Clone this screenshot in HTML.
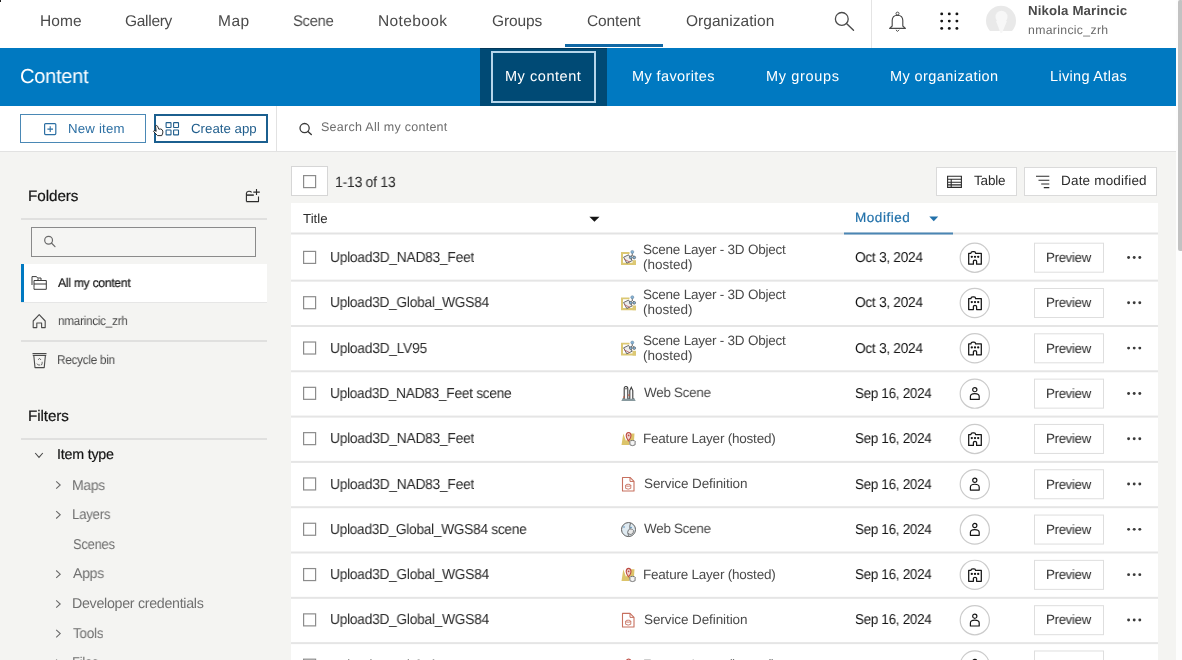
<!DOCTYPE html>
<html><head><meta charset="utf-8"><title>Content</title><style>
html,body{margin:0;padding:0}
body{width:1182px;height:660px;overflow:hidden;position:relative;background:#f4f4f2;font-family:"Liberation Sans",sans-serif}
.a{position:absolute;box-sizing:border-box}
.t{position:absolute;white-space:pre;line-height:20px;font-family:"Liberation Sans",sans-serif;will-change:transform;transform-origin:0 0;text-rendering:geometricPrecision}
svg.ov{position:absolute;left:0;top:0}
</style></head><body>
<!-- top nav -->
<div class="a" style="left:0;top:0;width:1176px;height:48px;background:#fff"></div>
<div class="a" style="left:0;top:0;width:1px;height:2px;background:#222"></div>
<div class="a" style="left:565px;top:44px;width:98px;height:3px;background:#1068a5"></div>
<div class="a" style="left:871px;top:0;width:1px;height:48px;background:#e4e4e4"></div>
<!-- banner -->
<div class="a" style="left:0;top:48px;width:1176px;height:58px;background:#0079c1"></div>
<div class="a" style="left:480px;top:48px;width:127px;height:58px;background:#004a75;border-top:1px solid #02385b"></div>
<div class="a" style="left:491px;top:51px;width:105px;height:52px;border:2px solid #b5d5ea"></div>
<!-- toolbar -->
<div class="a" style="left:0;top:106px;width:1176px;height:46px;background:#fff;border-bottom:1px solid #e2e2e2"></div>
<div class="a" style="left:276px;top:106px;width:1px;height:45px;background:#e2e2e2"></div>
<div class="a" style="left:20px;top:114px;width:126px;height:29px;border:1px solid #4a88b5;background:#fff"></div>
<div class="a" style="left:154px;top:114px;width:114px;height:29px;border:2px solid #1b5f8f;background:#fff"></div>
<!-- scrollbar -->
<div class="a" style="left:1176px;top:0;width:6px;height:660px;background:#fdfdfd"></div>
<div class="a" style="left:1178px;top:0;width:5px;height:251px;background:#c2c2c2;border-radius:2px"></div>
<!-- sidebar -->
<div class="a" style="left:21px;top:218px;width:246px;height:2px;background:#e0e0df"></div>
<div class="a" style="left:31px;top:227px;width:225px;height:30px;border:1.5px solid #8a8a8a;background:#f5f5f3"></div>
<div class="a" style="left:21px;top:264px;width:246px;height:38px;background:#fff"></div>
<div class="a" style="left:21px;top:264px;width:3px;height:38px;background:#0079c1"></div>
<div class="a" style="left:21px;top:302px;width:246px;height:1px;background:#e6e6e6"></div>
<div class="a" style="left:21px;top:340px;width:246px;height:2px;background:#e0e0df"></div>
<div class="a" style="left:21px;top:438px;width:246px;height:2px;background:#e0e0df"></div>
<!-- table top controls -->
<div class="a" style="left:291px;top:166px;width:37px;height:30px;border:1px solid #d6d6d6;background:#fff"></div>
<div class="a" style="left:936px;top:167px;width:81px;height:29px;border:1px solid #dadada;background:#fff"></div>
<div class="a" style="left:1024px;top:167px;width:133px;height:29px;border:1px solid #dadada;background:#fff"></div>
<!-- table -->
<div class="a" style="left:291px;top:203px;width:867px;height:457px;background:#fff"></div>
<!--ROWS-->
<svg class="ov" width="1182" height="660" viewBox="0 0 1182 660">
<defs>
<symbol id="org" viewBox="0 0 14 14" overflow="visible"><path d="M0.7 13.3 V2.4 H2.9 Q3 0.7 4.8 0.7 H6 Q7.5 0.7 7.6 2.4 H13.3 V13.3 H8.6 V10.3 Q8.6 9.2 7 9.2 Q5.4 9.2 5.4 10.3 V13.3 Z" fill="none" stroke="#151515" stroke-width="1.25" stroke-linejoin="round"/><circle cx="3.8" cy="5.9" r="1.15" fill="#151515"/><circle cx="7" cy="5.9" r="1.15" fill="#151515"/><circle cx="10.2" cy="5.9" r="1.15" fill="#151515"/></symbol>
<symbol id="me" viewBox="0 0 10 13" overflow="visible"><circle cx="5" cy="2.6" r="2.1" fill="none" stroke="#151515" stroke-width="1.2"/><path d="M0.6 12.4 V9.5 Q0.6 6.6 5 6.6 Q9.4 6.6 9.4 9.5 V12.4 Z" fill="none" stroke="#151515" stroke-width="1.2" stroke-linejoin="round"/></symbol>
<symbol id="obj" viewBox="0 0 15 15" overflow="visible"><path d="M0 1.9 H8.5 V3.7 H2 V12.6 H15 V14.7 H0 Z" fill="#dcc874"/><path d="M11.5 10 H15 V14.7 H11.5 Z" fill="#dcc874"/><path d="M2.6 7 L7.6 4.6 L11.2 10.4 L5.8 13 Z" fill="#ececec" stroke="#5a5a5a" stroke-width="0.9" stroke-linejoin="round"/><path d="M3.2 9 L9 12" stroke="#b85a5a" stroke-width="0.8"/><path d="M11.3 2.2 V4.8 M9.8 6.3 L11.3 4.8 L12.8 6.3" fill="none" stroke="#4a4a4a" stroke-width="0.8"/><circle cx="11.3" cy="1.7" r="1.5" fill="#86b3d6" stroke="#5d7d96" stroke-width="0.5"/><circle cx="9.8" cy="7.3" r="1.4" fill="#86b3d6" stroke="#4a4a4a" stroke-width="0.6"/><circle cx="13.2" cy="7.3" r="1.4" fill="#86b3d6" stroke="#4a4a4a" stroke-width="0.6"/></symbol>
<symbol id="city" viewBox="0 0 15 15" overflow="visible"><path d="M0.3 14.8 L1.8 11.8 H13.2 L14.7 14.8 Z" fill="#87999e"/><path d="M3.2 12.5 V2.5 Q3.2 0.3 5 0.3 Q6.8 0.3 6.8 2.5 V12.5" fill="#fafafa" stroke="#3c3c3c" stroke-width="1.1"/><path d="M8.8 12.5 V4.5 L10.3 1.2 L11.8 4.5 V12.5" fill="#fafafa" stroke="#3c3c3c" stroke-width="1.1"/><path d="M4.2 2.6 H5.8" stroke="#3c3c3c" stroke-width="0.9"/><circle cx="3" cy="11" r="0.8" fill="#c4573e"/><circle cx="8" cy="9" r="0.8" fill="#c4573e"/></symbol>
<symbol id="feat" viewBox="0 0 15 15" overflow="visible"><path d="M0.5 13.6 L2.3 2 L5 9.5 L9.5 2 L13.5 2 L13 9 H9.5 L8 13.6 Z" fill="#dcc46a"/><path d="M5.2 4.3 Q5.2 1 7.6 1 Q10 1 10 4.3 Q10 6.5 7.6 9.4 Q5.2 6.5 5.2 4.3 Z" fill="#f0d4d0" stroke="#bd4b43" stroke-width="1.1"/><circle cx="7.6" cy="4" r="0.9" fill="#bd4b43"/><ellipse cx="11.5" cy="10" rx="2.6" ry="1" fill="#fff" stroke="#6a6a6a" stroke-width="0.9"/><path d="M8.9 10 V13.4 Q11.5 15 14.1 13.4 V10" fill="#f4f4f4" stroke="#6a6a6a" stroke-width="0.9"/></symbol>
<symbol id="sd" viewBox="0 0 15 15" overflow="visible"><path d="M1.5 0.7 H9 L13 4.7 V14.3 H1.5 Z" fill="#fff" stroke="#c7705f" stroke-width="1.1" stroke-linejoin="round"/><path d="M9 0.7 V4.7 H13" fill="none" stroke="#c7705f" stroke-width="1"/><ellipse cx="7.2" cy="8.5" rx="2.6" ry="1" fill="#fff" stroke="#c7705f" stroke-width="0.9"/><path d="M4.6 8.5 V11.6 Q7.2 13.2 9.8 11.6 V8.5" fill="none" stroke="#c7705f" stroke-width="0.9"/></symbol>
<symbol id="globe" viewBox="0 0 15 15" overflow="visible"><circle cx="7.5" cy="7.5" r="7" fill="#dfeaf1" stroke="#5d5d5d" stroke-width="1"/><path d="M9.5 1.2 Q8.3 4 9 6.8 Q6.2 8 6.8 11 Q8.2 14 7 14.4" fill="none" stroke="#5d5d5d" stroke-width="0.9"/><path d="M9 7 Q11.5 6.5 12.5 8.5 Q13 11.5 10 12.5 Q7.5 12.5 7.2 10.8" fill="#e8e8e8" stroke="#5d5d5d" stroke-width="0.7"/><circle cx="3" cy="5" r="0.8" fill="#4f88b5"/><circle cx="10" cy="5.5" r="0.8" fill="#4f88b5"/></symbol>
</defs>
<circle cx="841.8" cy="18.9" r="6.4" fill="none" stroke="#4a4a4a" stroke-width="1.3"/><path d="M846.5 23.6 L853.5 30.2" stroke="#4a4a4a" stroke-width="1.4" stroke-linecap="round"/>
<path d="M889.6 28.4 H905.4 L902.8 26 V20.5 Q902.8 15.4 897.5 15.2 Q892.2 15.4 892.2 20.5 V26 Z" fill="none" stroke="#4a4a4a" stroke-width="1.15" stroke-linejoin="round"/><circle cx="897.5" cy="13.6" r="1.5" fill="none" stroke="#4a4a4a" stroke-width="1"/><path d="M895.9 29.8 L897.5 31.4 L899.1 29.8" fill="none" stroke="#4a4a4a" stroke-width="1"/>
<circle cx="941.7" cy="13.9" r="1.45" fill="#151515"/>
<circle cx="949.3" cy="13.9" r="1.45" fill="#151515"/>
<circle cx="956.9" cy="13.9" r="1.45" fill="#151515"/>
<circle cx="941.7" cy="21.1" r="1.45" fill="#151515"/>
<circle cx="949.3" cy="21.1" r="1.45" fill="#151515"/>
<circle cx="956.9" cy="21.1" r="1.45" fill="#151515"/>
<circle cx="941.7" cy="28.4" r="1.45" fill="#151515"/>
<circle cx="949.3" cy="28.4" r="1.45" fill="#151515"/>
<circle cx="956.9" cy="28.4" r="1.45" fill="#151515"/>
<path d="M990 31 A15 15 0 1 1 1012 31 Z" fill="#e9e9e9"/><ellipse cx="1001.5" cy="17" rx="6" ry="6.3" fill="#f7f7f7"/><path d="M996 21 L1007 21 L1002 33 L1000.5 33 Z" fill="#f7f7f7"/>
<rect x="44.6" y="123.6" width="11.2" height="11" rx="1" fill="none" stroke="#2c6fa3" stroke-width="1.2"/><path d="M50.2 126.3 V131.9 M47.4 129.1 H53" stroke="#2c6fa3" stroke-width="1.1"/>
<rect x="166.1" y="122.6" width="4.9" height="4.9" rx="0.5" fill="none" stroke="#1f5d8c" stroke-width="1.1"/>
<rect x="173.6" y="122.6" width="4.9" height="4.9" rx="0.5" fill="none" stroke="#1f5d8c" stroke-width="1.1"/>
<rect x="166.1" y="130" width="4.9" height="4.9" rx="0.5" fill="none" stroke="#1f5d8c" stroke-width="1.1"/>
<rect x="173.6" y="130" width="4.9" height="4.9" rx="0.5" fill="none" stroke="#1f5d8c" stroke-width="1.1"/>
<circle cx="304.6" cy="128.1" r="4.6" fill="none" stroke="#3a3a3a" stroke-width="1.3"/><path d="M307.9 131.4 L311.3 134.6" stroke="#3a3a3a" stroke-width="1.4" stroke-linecap="round"/>
<path d="M155.5 125.8 Q156.8 125 157.6 126.2 L158.8 129.2 Q160.8 128.6 162 129.6 Q163.2 130.8 162.8 133 L161.8 135.6 H157.6 L153.8 131.8 Q153.2 131 154 130.6 Q155 130.3 156.2 131.4 Z" fill="#fff" stroke="#1a1a1a" stroke-width="0.9" stroke-linejoin="round"/>
<path d="M246.4 201.6 V193.4 Q246.6 191.5 248.8 191.3 Q250.6 191.2 251.6 192.4 M246.4 201.6 H258.5 V196.5" fill="none" stroke="#2b2b2b" stroke-width="1.1" stroke-linejoin="round"/><path d="M246.4 195.1 H253.8" stroke="#2b2b2b" stroke-width="1.5"/><path d="M256.5 189.1 V194.9 M253.3 192.1 H259.8" stroke="#2b2b2b" stroke-width="1.1"/>
<circle cx="48.6" cy="240.2" r="3.9" fill="none" stroke="#6a6a6a" stroke-width="1.2"/><path d="M51.4 243 L55 246.6" stroke="#6a6a6a" stroke-width="1.2" stroke-linecap="round"/>
<path d="M32 285 V276.6 H36.5 L37.6 278 H41 V280.5 M34 287.5 V280.5 H46.3 V289.3 H34 Z M34 284 H46.3 M38 280.5 V278.5" fill="none" stroke="#3a3a3a" stroke-width="1" stroke-linejoin="round"/>
<path d="M33.2 321 L39.2 314.6 L45.2 321 V327.6 H41.6 V323 H36.8 V327.6 H33.2 Z" fill="none" stroke="#4a4a4a" stroke-width="1.1" stroke-linejoin="round"/>
<path d="M32.5 353.6 H46.5 M32.8 355.5 H46.2 M33.8 355.5 L35 367.6 H44.2 L45.4 355.5" fill="none" stroke="#4a4a4a" stroke-width="1.1" stroke-linejoin="round"/><path d="M38 359.8 L39.6 358.4 L41 360 M37 363.6 L38.2 365 H40 M42.2 361.8 L42 364.4 L40.8 365" fill="none" stroke="#4a4a4a" stroke-width="0.8"/>
<path d="M35.2 453 L39 457.3 L42.8 453" fill="none" stroke="#4a4a4a" stroke-width="1.1"/>
<path d="M56.2 481.3 L60.2 485.0 L56.2 488.7" fill="none" stroke="#6a6a6a" stroke-width="1.1"/>
<path d="M56.2 511.1 L60.2 514.8 L56.2 518.5" fill="none" stroke="#6a6a6a" stroke-width="1.1"/>
<path d="M56.2 570.5 L60.2 574.2 L56.2 577.9" fill="none" stroke="#6a6a6a" stroke-width="1.1"/>
<path d="M56.2 600.3 L60.2 604.0 L56.2 607.7" fill="none" stroke="#6a6a6a" stroke-width="1.1"/>
<path d="M56.2 629.9 L60.2 633.6 L56.2 637.3" fill="none" stroke="#6a6a6a" stroke-width="1.1"/>
<path d="M56.2 659.6 L60.2 663.3 L56.2 667.0" fill="none" stroke="#6a6a6a" stroke-width="1.1"/>
<rect x="303.6" y="175.6" width="12" height="12" fill="none" stroke="#8c8c8c" stroke-width="1.2"/>
<path d="M947.6 176.2 H961.4 V187.4 H947.6 Z M947.6 179.2 H961.4 M947.6 182.2 H961.4 M947.6 184.9 H961.4 M951.2 179.2 V187.4" fill="none" stroke="#2b2b2b" stroke-width="1.1"/>
<path d="M1036 176.3 H1049.3 M1038.5 180.2 H1049.3 M1041.2 184 H1049.3 M1043.8 187.6 H1049.3" stroke="#2b2b2b" stroke-width="1.1"/>
<path d="M589.4 216.7 H599.5 L594.45 221.8 Z" fill="#151515"/>
<path d="M929.3 216.4 H938.2 L933.75 221.3 Z" fill="#2271aa"/>
<rect x="291" y="232.5" width="867" height="2" fill="#e3e3e3"/>
<rect x="844" y="232.5" width="109" height="2" fill="#4a86b4"/>
<rect x="291" y="279.65" width="867" height="2" fill="#e5e5e5"/>
<rect x="303.6" y="251.40" width="12" height="12" fill="none" stroke="#8c8c8c" stroke-width="1.2"/>
<use href="#obj" x="621" y="250.20" width="15" height="15"/>
<circle cx="974.8" cy="257.70" r="14.6" fill="#fff" stroke="#cbcbcb" stroke-width="1.2"/>
<use href="#org" x="968" y="250.90" width="14" height="14"/>
<rect x="1034.5" y="243.20" width="69" height="29" fill="#fff" stroke="#dedede" stroke-width="1"/>
<circle cx="1128.6" cy="257.50" r="1.45" fill="#3a3a3a"/>
<circle cx="1134.2" cy="257.50" r="1.45" fill="#3a3a3a"/>
<circle cx="1139.8" cy="257.50" r="1.45" fill="#3a3a3a"/>
<rect x="291" y="324.97" width="867" height="2" fill="#e5e5e5"/>
<rect x="303.6" y="296.71" width="12" height="12" fill="none" stroke="#8c8c8c" stroke-width="1.2"/>
<use href="#obj" x="621" y="295.51" width="15" height="15"/>
<circle cx="974.8" cy="303.01" r="14.6" fill="#fff" stroke="#cbcbcb" stroke-width="1.2"/>
<use href="#org" x="968" y="296.21" width="14" height="14"/>
<rect x="1034.5" y="288.51" width="69" height="29" fill="#fff" stroke="#dedede" stroke-width="1"/>
<circle cx="1128.6" cy="302.81" r="1.45" fill="#3a3a3a"/>
<circle cx="1134.2" cy="302.81" r="1.45" fill="#3a3a3a"/>
<circle cx="1139.8" cy="302.81" r="1.45" fill="#3a3a3a"/>
<rect x="291" y="370.27" width="867" height="2" fill="#e5e5e5"/>
<rect x="303.6" y="342.02" width="12" height="12" fill="none" stroke="#8c8c8c" stroke-width="1.2"/>
<use href="#obj" x="621" y="340.82" width="15" height="15"/>
<circle cx="974.8" cy="348.32" r="14.6" fill="#fff" stroke="#cbcbcb" stroke-width="1.2"/>
<use href="#org" x="968" y="341.52" width="14" height="14"/>
<rect x="1034.5" y="333.82" width="69" height="29" fill="#fff" stroke="#dedede" stroke-width="1"/>
<circle cx="1128.6" cy="348.12" r="1.45" fill="#3a3a3a"/>
<circle cx="1134.2" cy="348.12" r="1.45" fill="#3a3a3a"/>
<circle cx="1139.8" cy="348.12" r="1.45" fill="#3a3a3a"/>
<rect x="291" y="415.59" width="867" height="2" fill="#e5e5e5"/>
<rect x="303.6" y="387.33" width="12" height="12" fill="none" stroke="#8c8c8c" stroke-width="1.2"/>
<use href="#city" x="621" y="386.13" width="15" height="15"/>
<circle cx="974.8" cy="393.63" r="14.6" fill="#fff" stroke="#cbcbcb" stroke-width="1.2"/>
<use href="#me" x="969.8" y="387.03" width="10" height="13"/>
<rect x="1034.5" y="379.13" width="69" height="29" fill="#fff" stroke="#dedede" stroke-width="1"/>
<circle cx="1128.6" cy="393.43" r="1.45" fill="#3a3a3a"/>
<circle cx="1134.2" cy="393.43" r="1.45" fill="#3a3a3a"/>
<circle cx="1139.8" cy="393.43" r="1.45" fill="#3a3a3a"/>
<rect x="291" y="460.89" width="867" height="2" fill="#e5e5e5"/>
<rect x="303.6" y="432.64" width="12" height="12" fill="none" stroke="#8c8c8c" stroke-width="1.2"/>
<use href="#feat" x="621" y="431.44" width="15" height="15"/>
<circle cx="974.8" cy="438.94" r="14.6" fill="#fff" stroke="#cbcbcb" stroke-width="1.2"/>
<use href="#org" x="968" y="432.14" width="14" height="14"/>
<rect x="1034.5" y="424.44" width="69" height="29" fill="#fff" stroke="#dedede" stroke-width="1"/>
<circle cx="1128.6" cy="438.74" r="1.45" fill="#3a3a3a"/>
<circle cx="1134.2" cy="438.74" r="1.45" fill="#3a3a3a"/>
<circle cx="1139.8" cy="438.74" r="1.45" fill="#3a3a3a"/>
<rect x="291" y="506.21" width="867" height="2" fill="#e5e5e5"/>
<rect x="303.6" y="477.95" width="12" height="12" fill="none" stroke="#8c8c8c" stroke-width="1.2"/>
<use href="#sd" x="621" y="476.75" width="15" height="15"/>
<circle cx="974.8" cy="484.25" r="14.6" fill="#fff" stroke="#cbcbcb" stroke-width="1.2"/>
<use href="#me" x="969.8" y="477.65" width="10" height="13"/>
<rect x="1034.5" y="469.75" width="69" height="29" fill="#fff" stroke="#dedede" stroke-width="1"/>
<circle cx="1128.6" cy="484.05" r="1.45" fill="#3a3a3a"/>
<circle cx="1134.2" cy="484.05" r="1.45" fill="#3a3a3a"/>
<circle cx="1139.8" cy="484.05" r="1.45" fill="#3a3a3a"/>
<rect x="291" y="551.51" width="867" height="2" fill="#e5e5e5"/>
<rect x="303.6" y="523.26" width="12" height="12" fill="none" stroke="#8c8c8c" stroke-width="1.2"/>
<use href="#globe" x="621" y="522.06" width="15" height="15"/>
<circle cx="974.8" cy="529.56" r="14.6" fill="#fff" stroke="#cbcbcb" stroke-width="1.2"/>
<use href="#me" x="969.8" y="522.96" width="10" height="13"/>
<rect x="1034.5" y="515.06" width="69" height="29" fill="#fff" stroke="#dedede" stroke-width="1"/>
<circle cx="1128.6" cy="529.36" r="1.45" fill="#3a3a3a"/>
<circle cx="1134.2" cy="529.36" r="1.45" fill="#3a3a3a"/>
<circle cx="1139.8" cy="529.36" r="1.45" fill="#3a3a3a"/>
<rect x="291" y="596.83" width="867" height="2" fill="#e5e5e5"/>
<rect x="303.6" y="568.57" width="12" height="12" fill="none" stroke="#8c8c8c" stroke-width="1.2"/>
<use href="#feat" x="621" y="567.37" width="15" height="15"/>
<circle cx="974.8" cy="574.87" r="14.6" fill="#fff" stroke="#cbcbcb" stroke-width="1.2"/>
<use href="#org" x="968" y="568.07" width="14" height="14"/>
<rect x="1034.5" y="560.37" width="69" height="29" fill="#fff" stroke="#dedede" stroke-width="1"/>
<circle cx="1128.6" cy="574.67" r="1.45" fill="#3a3a3a"/>
<circle cx="1134.2" cy="574.67" r="1.45" fill="#3a3a3a"/>
<circle cx="1139.8" cy="574.67" r="1.45" fill="#3a3a3a"/>
<rect x="291" y="642.13" width="867" height="2" fill="#e5e5e5"/>
<rect x="303.6" y="613.88" width="12" height="12" fill="none" stroke="#8c8c8c" stroke-width="1.2"/>
<use href="#sd" x="621" y="612.68" width="15" height="15"/>
<circle cx="974.8" cy="620.18" r="14.6" fill="#fff" stroke="#cbcbcb" stroke-width="1.2"/>
<use href="#me" x="969.8" y="613.58" width="10" height="13"/>
<rect x="1034.5" y="605.68" width="69" height="29" fill="#fff" stroke="#dedede" stroke-width="1"/>
<circle cx="1128.6" cy="619.98" r="1.45" fill="#3a3a3a"/>
<circle cx="1134.2" cy="619.98" r="1.45" fill="#3a3a3a"/>
<circle cx="1139.8" cy="619.98" r="1.45" fill="#3a3a3a"/>
<rect x="291" y="687.44" width="867" height="2" fill="#e5e5e5"/>
<rect x="303.6" y="659.19" width="12" height="12" fill="none" stroke="#8c8c8c" stroke-width="1.2"/>
<use href="#feat" x="621" y="657.99" width="15" height="15"/>
<circle cx="974.8" cy="665.49" r="14.6" fill="#fff" stroke="#cbcbcb" stroke-width="1.2"/>
<use href="#me" x="969.8" y="658.89" width="10" height="13"/>
<rect x="1034.5" y="650.99" width="69" height="29" fill="#fff" stroke="#dedede" stroke-width="1"/>
<circle cx="1128.6" cy="665.29" r="1.45" fill="#3a3a3a"/>
<circle cx="1134.2" cy="665.29" r="1.45" fill="#3a3a3a"/>
<circle cx="1139.8" cy="665.29" r="1.45" fill="#3a3a3a"/>
</svg>
<div class="t" style="left:39.50px;top:11.7px;font-size:15.5px;font-weight:400;color:#4a4a4a;letter-spacing:0.091px;">Home</div>
<div class="t" style="left:125.40px;top:11.7px;font-size:15.5px;font-weight:400;color:#4a4a4a;letter-spacing:-0.291px;">Gallery</div>
<div class="t" style="left:217.50px;top:11.7px;font-size:15.5px;font-weight:400;color:#4a4a4a;letter-spacing:0.484px;">Map</div>
<div class="t" style="left:293.40px;top:11.7px;font-size:15.5px;font-weight:400;color:#4a4a4a;letter-spacing:-0.300px;transform:scaleX(0.9518);">Scene</div>
<div class="t" style="left:377.90px;top:11.7px;font-size:15.5px;font-weight:400;color:#4a4a4a;letter-spacing:0.371px;">Notebook</div>
<div class="t" style="left:491.90px;top:11.7px;font-size:15.5px;font-weight:400;color:#4a4a4a;letter-spacing:-0.116px;">Groups</div>
<div class="t" style="left:586.80px;top:11.7px;font-size:15.5px;font-weight:400;color:#4a4a4a;letter-spacing:-0.114px;">Content</div>
<div class="t" style="left:685.60px;top:11.7px;font-size:15.5px;font-weight:400;color:#4a4a4a;letter-spacing:0.040px;">Organization</div>
<div class="t" style="left:1028.00px;top:0.6px;font-size:13.25px;font-weight:700;color:#4a4a4a;letter-spacing:0.141px;">Nikola Marincic</div>
<div class="t" style="left:1028.00px;top:19.8px;font-size:12.25px;font-weight:400;color:#6a6a6a;letter-spacing:0.322px;">nmarincic_zrh</div>
<div class="t" style="left:20.01px;top:66.9px;font-size:20.25px;font-weight:400;color:#ffffff;letter-spacing:-0.300px;transform:scaleX(0.9927);">Content</div>
<div class="t" style="left:505.20px;top:67.3px;font-size:14.5px;font-weight:400;color:#ffffff;letter-spacing:0.545px;">My content</div>
<div class="t" style="left:632.20px;top:67.3px;font-size:14.5px;font-weight:400;color:#ffffff;letter-spacing:0.390px;">My favorites</div>
<div class="t" style="left:765.60px;top:67.3px;font-size:14.5px;font-weight:400;color:#ffffff;letter-spacing:0.657px;">My groups</div>
<div class="t" style="left:890.00px;top:67.3px;font-size:14.5px;font-weight:400;color:#ffffff;letter-spacing:0.415px;">My organization</div>
<div class="t" style="left:1050.10px;top:67.3px;font-size:14.5px;font-weight:400;color:#ffffff;letter-spacing:0.318px;">Living Atlas</div>
<div class="t" style="left:67.50px;top:118.8px;font-size:13.25px;font-weight:400;color:#2c6fa3;letter-spacing:0.188px;">New item</div>
<div class="t" style="left:191.00px;top:118.8px;font-size:13.25px;font-weight:400;color:#1f5d8c;letter-spacing:0.012px;">Create app</div>
<div class="t" style="left:321.20px;top:117.4px;font-size:12.5px;font-weight:400;color:#6e6e6e;letter-spacing:0.270px;">Search All my content</div>
<div class="t" style="left:27.60px;top:187.0px;font-size:15.25px;font-weight:400;color:#151515;letter-spacing:-0.071px;-webkit-text-stroke:0.2px #151515">Folders</div>
<div class="t" style="left:57.90px;top:272.6px;font-size:12.5px;font-weight:400;color:#151515;letter-spacing:-0.300px;transform:scaleX(0.9743);-webkit-text-stroke:0.2px #151515">All my content</div>
<div class="t" style="left:57.90px;top:311.0px;font-size:12.75px;font-weight:400;color:#4a4a4a;letter-spacing:-0.300px;transform:scaleX(0.9211);">nmarincic_zrh</div>
<div class="t" style="left:56.98px;top:350.2px;font-size:12.75px;font-weight:400;color:#4a4a4a;letter-spacing:-0.300px;transform:scaleX(0.9238);">Recycle bin</div>
<div class="t" style="left:27.60px;top:407.4px;font-size:15.25px;font-weight:400;color:#151515;letter-spacing:-0.098px;-webkit-text-stroke:0.2px #151515">Filters</div>
<div class="t" style="left:56.90px;top:444.8px;font-size:14.25px;font-weight:400;color:#151515;letter-spacing:-0.198px;-webkit-text-stroke:0.2px #151515">Item type</div>
<div class="t" style="left:71.62px;top:475.6px;font-size:14.25px;font-weight:400;color:#707070;letter-spacing:-0.300px;transform:scaleX(0.9780);">Maps</div>
<div class="t" style="left:71.67px;top:505.3px;font-size:14.25px;font-weight:400;color:#707070;letter-spacing:-0.300px;transform:scaleX(0.9316);">Layers</div>
<div class="t" style="left:72.60px;top:534.5px;font-size:14.25px;font-weight:400;color:#707070;letter-spacing:-0.300px;transform:scaleX(0.9106);">Scenes</div>
<div class="t" style="left:72.60px;top:564.1px;font-size:14.25px;font-weight:400;color:#707070;letter-spacing:-0.300px;transform:scaleX(0.9855);">Apps</div>
<div class="t" style="left:71.60px;top:594.2px;font-size:14.25px;font-weight:400;color:#707070;letter-spacing:-0.300px;">Developer credentials</div>
<div class="t" style="left:72.60px;top:623.6px;font-size:14.25px;font-weight:400;color:#707070;letter-spacing:-0.300px;transform:scaleX(0.9517);">Tools</div>
<div class="t" style="left:71.69px;top:653.3px;font-size:14.25px;font-weight:400;color:#707070;letter-spacing:-0.300px;transform:scaleX(0.9149);">Files</div>
<div class="t" style="left:335.05px;top:172.5px;font-size:14.75px;font-weight:400;color:#2b2b2b;letter-spacing:-0.300px;transform:scaleX(0.9533);">1-13 of 13</div>
<div class="t" style="left:974.00px;top:171.4px;font-size:13.5px;font-weight:400;color:#2b2b2b;letter-spacing:-0.191px;">Table</div>
<div class="t" style="left:1060.60px;top:171.4px;font-size:13.5px;font-weight:400;color:#2b2b2b;letter-spacing:0.193px;">Date modified</div>
<div class="t" style="left:303.40px;top:208.8px;font-size:13.25px;font-weight:400;color:#2b2b2b;letter-spacing:0.032px;">Title</div>
<div class="t" style="left:855.30px;top:208.3px;font-size:13.5px;font-weight:400;color:#2271aa;letter-spacing:0.540px;-webkit-text-stroke:0.2px #2271aa">Modified</div>
<div class="t" style="left:330.34px;top:248.0px;font-size:14.5px;font-weight:400;color:#2b2b2b;letter-spacing:-0.300px;transform:scaleX(0.9557);">Upload3D_NAD83_Feet</div>
<div class="t" style="left:643.40px;top:240.0px;font-size:13.5px;font-weight:400;color:#4a4a4a;letter-spacing:-0.230px;">Scene Layer - 3D Object</div>
<div class="t" style="left:643.40px;top:254.9px;font-size:13.5px;font-weight:400;color:#4a4a4a;letter-spacing:-0.018px;">(hosted)</div>
<div class="t" style="left:854.50px;top:248.0px;font-size:14.25px;font-weight:400;color:#151515;letter-spacing:-0.300px;transform:scaleX(0.9626);">Oct 3, 2024</div>
<div class="t" style="left:1045.62px;top:248.0px;font-size:13.5px;font-weight:400;color:#2b2b2b;letter-spacing:-0.300px;transform:scaleX(0.9788);">Preview</div>
<div class="t" style="left:330.35px;top:293.31px;font-size:14.5px;font-weight:400;color:#2b2b2b;letter-spacing:-0.300px;transform:scaleX(0.9517);">Upload3D_Global_WGS84</div>
<div class="t" style="left:643.40px;top:285.31px;font-size:13.5px;font-weight:400;color:#4a4a4a;letter-spacing:-0.230px;">Scene Layer - 3D Object</div>
<div class="t" style="left:643.40px;top:300.21px;font-size:13.5px;font-weight:400;color:#4a4a4a;letter-spacing:-0.018px;">(hosted)</div>
<div class="t" style="left:854.50px;top:293.31px;font-size:14.25px;font-weight:400;color:#151515;letter-spacing:-0.300px;transform:scaleX(0.9626);">Oct 3, 2024</div>
<div class="t" style="left:1045.62px;top:293.31px;font-size:13.5px;font-weight:400;color:#2b2b2b;letter-spacing:-0.300px;transform:scaleX(0.9788);">Preview</div>
<div class="t" style="left:330.35px;top:338.62px;font-size:14.5px;font-weight:400;color:#2b2b2b;letter-spacing:-0.300px;transform:scaleX(0.9546);">Upload3D_LV95</div>
<div class="t" style="left:643.40px;top:330.62px;font-size:13.5px;font-weight:400;color:#4a4a4a;letter-spacing:-0.230px;">Scene Layer - 3D Object</div>
<div class="t" style="left:643.40px;top:345.52px;font-size:13.5px;font-weight:400;color:#4a4a4a;letter-spacing:-0.018px;">(hosted)</div>
<div class="t" style="left:854.50px;top:338.62px;font-size:14.25px;font-weight:400;color:#151515;letter-spacing:-0.300px;transform:scaleX(0.9626);">Oct 3, 2024</div>
<div class="t" style="left:1045.62px;top:338.62px;font-size:13.5px;font-weight:400;color:#2b2b2b;letter-spacing:-0.300px;transform:scaleX(0.9788);">Preview</div>
<div class="t" style="left:330.35px;top:383.93px;font-size:14.5px;font-weight:400;color:#2b2b2b;letter-spacing:-0.300px;transform:scaleX(0.9469);">Upload3D_NAD83_Feet scene</div>
<div class="t" style="left:643.60px;top:383.43px;font-size:13.5px;font-weight:400;color:#4a4a4a;letter-spacing:-0.300px;transform:scaleX(0.9950);">Web Scene</div>
<div class="t" style="left:854.50px;top:383.93px;font-size:14.25px;font-weight:400;color:#151515;letter-spacing:-0.300px;transform:scaleX(0.9417);">Sep 16, 2024</div>
<div class="t" style="left:1045.62px;top:383.93px;font-size:13.5px;font-weight:400;color:#2b2b2b;letter-spacing:-0.300px;transform:scaleX(0.9788);">Preview</div>
<div class="t" style="left:330.34px;top:429.24px;font-size:14.5px;font-weight:400;color:#2b2b2b;letter-spacing:-0.300px;transform:scaleX(0.9557);">Upload3D_NAD83_Feet</div>
<div class="t" style="left:642.60px;top:428.74px;font-size:13.5px;font-weight:400;color:#4a4a4a;letter-spacing:-0.220px;">Feature Layer (hosted)</div>
<div class="t" style="left:854.50px;top:429.24px;font-size:14.25px;font-weight:400;color:#151515;letter-spacing:-0.300px;transform:scaleX(0.9417);">Sep 16, 2024</div>
<div class="t" style="left:1045.62px;top:429.24px;font-size:13.5px;font-weight:400;color:#2b2b2b;letter-spacing:-0.300px;transform:scaleX(0.9788);">Preview</div>
<div class="t" style="left:330.34px;top:474.55px;font-size:14.5px;font-weight:400;color:#2b2b2b;letter-spacing:-0.300px;transform:scaleX(0.9557);">Upload3D_NAD83_Feet</div>
<div class="t" style="left:643.60px;top:474.05px;font-size:13.5px;font-weight:400;color:#4a4a4a;letter-spacing:-0.091px;">Service Definition</div>
<div class="t" style="left:854.50px;top:474.55px;font-size:14.25px;font-weight:400;color:#151515;letter-spacing:-0.300px;transform:scaleX(0.9417);">Sep 16, 2024</div>
<div class="t" style="left:1045.62px;top:474.55px;font-size:13.5px;font-weight:400;color:#2b2b2b;letter-spacing:-0.300px;transform:scaleX(0.9788);">Preview</div>
<div class="t" style="left:330.36px;top:519.86px;font-size:14.5px;font-weight:400;color:#2b2b2b;letter-spacing:-0.300px;transform:scaleX(0.9447);">Upload3D_Global_WGS84 scene</div>
<div class="t" style="left:643.60px;top:519.36px;font-size:13.5px;font-weight:400;color:#4a4a4a;letter-spacing:-0.300px;transform:scaleX(0.9950);">Web Scene</div>
<div class="t" style="left:854.50px;top:519.86px;font-size:14.25px;font-weight:400;color:#151515;letter-spacing:-0.300px;transform:scaleX(0.9417);">Sep 16, 2024</div>
<div class="t" style="left:1045.62px;top:519.86px;font-size:13.5px;font-weight:400;color:#2b2b2b;letter-spacing:-0.300px;transform:scaleX(0.9788);">Preview</div>
<div class="t" style="left:330.35px;top:565.17px;font-size:14.5px;font-weight:400;color:#2b2b2b;letter-spacing:-0.300px;transform:scaleX(0.9517);">Upload3D_Global_WGS84</div>
<div class="t" style="left:642.60px;top:564.67px;font-size:13.5px;font-weight:400;color:#4a4a4a;letter-spacing:-0.220px;">Feature Layer (hosted)</div>
<div class="t" style="left:854.50px;top:565.17px;font-size:14.25px;font-weight:400;color:#151515;letter-spacing:-0.300px;transform:scaleX(0.9417);">Sep 16, 2024</div>
<div class="t" style="left:1045.62px;top:565.17px;font-size:13.5px;font-weight:400;color:#2b2b2b;letter-spacing:-0.300px;transform:scaleX(0.9788);">Preview</div>
<div class="t" style="left:330.35px;top:610.48px;font-size:14.5px;font-weight:400;color:#2b2b2b;letter-spacing:-0.300px;transform:scaleX(0.9517);">Upload3D_Global_WGS84</div>
<div class="t" style="left:643.60px;top:609.98px;font-size:13.5px;font-weight:400;color:#4a4a4a;letter-spacing:-0.091px;">Service Definition</div>
<div class="t" style="left:854.50px;top:610.48px;font-size:14.25px;font-weight:400;color:#151515;letter-spacing:-0.300px;transform:scaleX(0.9417);">Sep 16, 2024</div>
<div class="t" style="left:1045.62px;top:610.48px;font-size:13.5px;font-weight:400;color:#2b2b2b;letter-spacing:-0.300px;transform:scaleX(0.9788);">Preview</div>
<div class="t" style="left:330.35px;top:655.79px;font-size:14.5px;font-weight:400;color:#2b2b2b;letter-spacing:-0.300px;transform:scaleX(0.9517);">Upload3D_Global_WGS84</div>
<div class="t" style="left:642.60px;top:655.29px;font-size:13.5px;font-weight:400;color:#4a4a4a;letter-spacing:-0.220px;">Feature Layer (hosted)</div>
<div class="t" style="left:854.50px;top:655.79px;font-size:14.25px;font-weight:400;color:#151515;letter-spacing:-0.300px;transform:scaleX(0.9417);">Sep 16, 2024</div>
<div class="t" style="left:1045.62px;top:655.79px;font-size:13.5px;font-weight:400;color:#2b2b2b;letter-spacing:-0.300px;transform:scaleX(0.9788);">Preview</div>
</body></html>
